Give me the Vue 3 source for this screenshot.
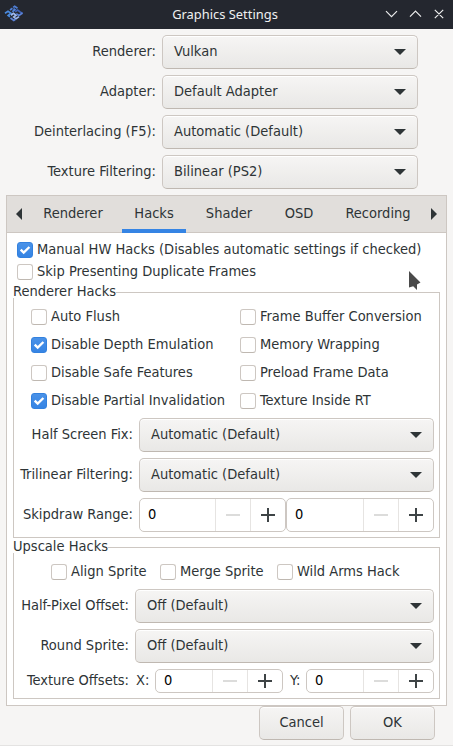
<script setup>
const topRows = [
  { label: 'Renderer:', value: 'Vulkan' },
  { label: 'Adapter:', value: 'Default Adapter' },
  { label: 'Deinterlacing (F5):', value: 'Automatic (Default)' },
  { label: 'Texture Filtering:', value: 'Bilinear (PS2)' },
]
const tabs = [
  { label: 'Renderer', cls: 't1' },
  { label: 'Hacks', cls: 't2 active' },
  { label: 'Shader', cls: 't3' },
  { label: 'OSD', cls: 't4' },
  { label: 'Recording', cls: 't5' },
]
const general = [
  { label: 'Manual HW Hacks (Disables automatic settings if checked)', on: true },
  { label: 'Skip Presenting Duplicate Frames', on: false },
]
const hacks = [
  { label: 'Auto Flush', on: false },
  { label: 'Frame Buffer Conversion', on: false },
  { label: 'Disable Depth Emulation', on: true },
  { label: 'Memory Wrapping', on: false },
  { label: 'Disable Safe Features', on: false },
  { label: 'Preload Frame Data', on: false },
  { label: 'Disable Partial Invalidation', on: true },
  { label: 'Texture Inside RT', on: false },
]
const hackSelects = [
  { label: 'Half Screen Fix:', value: 'Automatic (Default)' },
  { label: 'Trilinear Filtering:', value: 'Automatic (Default)' },
]
const sprites = ['Align Sprite', 'Merge Sprite', 'Wild Arms Hack']
const upscaleSelects = [
  { label: 'Half-Pixel Offset:', value: 'Off (Default)' },
  { label: 'Round Sprite:', value: 'Off (Default)' },
]
</script>

<template>
  <div class="window">
    <header class="titlebar">
      <svg class="logo" width="20" height="18" viewBox="0 0 20 18">
        <g fill="none" stroke-width="1.7">
          <path d="M1 8.2 4 6.2 7 8.3 4.2 10.4 6 11.7" stroke="#4a8be0" />
          <path d="M6 5 8.5 3.2M8.3 6.8 11 4.8 9.5 3.6M9.2 2.4 10.7 1.3 13.5 3.2" stroke="#4f7fd6" />
          <path d="M11.2 6.9 13.6 5.1 16.2 7 18.6 8.4" stroke="#3d5fb4" />
          <path d="M7 10.3 9.5 8.4 12 10.2 9.7 12 12 13.8 15 11.6" stroke="#9db7ee" />
          <path d="M12.3 8.6 15 10.4 18.5 8M6.5 13 9.8 15.4 11.4 14.2" stroke="#5c83d8" />
        </g>
      </svg>
      <span class="title">Graphics Settings</span>
      <svg class="controls" width="60" height="12" viewBox="0 0 60 12">
        <path d="M1 3.2 6.5 8.7 12 3.2M25 8.7 30.5 3.2 36 8.7M49.8 1.8 58.2 10.2M58.2 1.8 49.8 10.2" fill="none" stroke="#eceded" stroke-width="1.2" />
      </svg>
    </header>

    <section class="top">
      <div v-for="r in topRows" :key="r.label" class="row">
        <span class="label">{{ r.label }}</span>
        <button class="combo">{{ r.value }}<i class="arrow"></i></button>
      </div>
    </section>

    <section class="notebook">
      <nav class="tabs">
        <i class="scroll left"></i>
        <span v-for="t in tabs" :key="t.label" class="tab" :class="t.cls">{{ t.label }}</span>
        <i class="scroll right"></i>
      </nav>
      <div class="page">
        <div class="general">
          <label v-for="c in general" :key="c.label" class="check">
            <span class="box" :class="{ on: c.on }"><svg v-if="c.on" width="14" height="14" viewBox="0 0 14 14"><path d="M2.7 6.6 5.7 9.6 11.4 4" /></svg></span><span class="text">{{ c.label }}</span>
          </label>
        </div>

        <div class="group renderer">
          <div class="legend">Renderer Hacks</div>
          <div class="grid">
            <label v-for="c in hacks" :key="c.label" class="check">
              <span class="box" :class="{ on: c.on }"><svg v-if="c.on" width="14" height="14" viewBox="0 0 14 14"><path d="M2.7 6.6 5.7 9.6 11.4 4" /></svg></span><span class="text">{{ c.label }}</span>
            </label>
          </div>
          <div v-for="r in hackSelects" :key="r.label" class="row">
            <span class="label">{{ r.label }}</span>
            <button class="combo">{{ r.value }}<i class="arrow"></i></button>
          </div>
          <div class="row range">
            <span class="label">Skipdraw Range:</span>
            <div v-for="n in 2" :key="n" class="spin"><span class="num">0</span><i class="minus"></i><i class="plus"></i></div>
          </div>
        </div>

        <div class="group upscale">
          <div class="legend">Upscale Hacks</div>
          <div class="sprites">
            <label v-for="s in sprites" :key="s" class="check"><span class="box"></span><span class="text">{{ s }}</span></label>
          </div>
          <div v-for="r in upscaleSelects" :key="r.label" class="row">
            <span class="label">{{ r.label }}</span>
            <button class="combo">{{ r.value }}<i class="arrow"></i></button>
          </div>
          <div class="row offsets">
            <span class="label">Texture Offsets:</span>
            <span class="axis x">X:</span>
            <div class="spin"><span class="num">0</span><i class="minus"></i><i class="plus"></i></div>
            <span class="axis y">Y:</span>
            <div class="spin"><span class="num">0</span><i class="minus"></i><i class="plus"></i></div>
          </div>
        </div>
        <svg class="cursor" width="18" height="24" viewBox="0 0 18 24">
          <path d="M3 2V18.5L7.2 17.2 11 21V15.5L14.5 13.5Z" fill="#4a4a4a" stroke="#fff" stroke-width="2" paint-order="stroke" />
        </svg>
      </div>
    </section>

    <footer class="actions">
      <button class="btn">Cancel</button>
      <button class="btn">OK</button>
    </footer>
  </div>
</template>

<style>
body { margin: 0; overflow: hidden; }
</style>

<style scoped>
* { box-sizing: border-box; }
.window {
  width: 453px;
  height: 746px;
  background: #f6f5f4;
  border-bottom: 1px solid #e4e3e2;
  color: #2e3436;
  font-family: "DejaVu Sans Condensed", "DejaVu Sans", sans-serif;
  font-stretch: condensed;
  font-size: 14.53px;
  line-height: 18px;
  white-space: nowrap;
  overflow: hidden;
}
.titlebar {
  height: 29px;
  background: #24272f;
  display: flex;
  align-items: center;
  justify-content: space-between;
  padding: 0 8px 0 4px;
}
.logo { margin-top: -2px; }
.title {
  font-family: "Noto Sans", sans-serif;
  font-stretch: normal;
  font-size: 12.9px;
  color: #eff0f1;
  margin: -2px 0 0 41px;
}
.controls { margin-top: -1px; }
.top {
  padding: 6px 35px 0 0;
  display: grid;
  gap: 6px;
}
.row { display: flex; }
.label {
  text-align: right;
  line-height: 32px;
  padding-right: 6px;
  flex: none;
}
.top .label { width: 162px; }
.combo, .btn {
  font: inherit;
  color: inherit;
  height: 34px;
  border: 1px solid #cdc7c2;
  border-bottom-color: #bfb8b1;
  border-radius: 5px;
  background: linear-gradient(#f6f5f4, #e9e8e6);
  box-shadow: inset 0 1px #fff;
  margin: 0;
}
.combo {
  flex: 1;
  display: flex;
  align-items: center;
  justify-content: space-between;
  padding: 0 11px 2px;
}
.arrow {
  width: 12px;
  height: 6px;
  background: #2e3436;
  clip-path: polygon(0 0, 100% 0, 50% 100%);
  margin-top: 2px;
}
.notebook {
  margin: 6px 6px 0;
  width: 441px;
  height: 511px;
  border: 1px solid #cdc7c2;
  background: #fff;
}
.tabs {
  height: 37px;
  background: #e1dedb;
  border-bottom: 1px solid #cdc7c2;
  display: flex;
  align-items: center;
}
.tab {
  height: 37px;
  align-self: flex-start;
  line-height: 34px;
  text-align: center;
  flex: none;
}
.t1 { width: 80px; margin-left: 11px; }
.t2 { width: 64px; margin-left: 9px; }
.t3 { width: 62px; margin-left: 12px; }
.t4 { width: 50px; margin-left: 14px; }
.t5 { width: 80px; margin-left: 14px; }
.active { border-bottom: 4px solid #3584e4; }
.scroll { width: 6px; height: 12px; background: #2e3436; flex: none; }
.left { margin-left: 9px; clip-path: polygon(100% 0, 100% 100%, 0 50%); }
.right { margin-left: 13px; clip-path: polygon(0 0, 100% 50%, 0 100%); }
.page {
  position: relative;
  padding: 9px 6px 0;
}
.general { padding-left: 4px; display: grid; gap: 6px; }
.check {
  display: flex;
  align-items: center;
  height: 16px;
  line-height: 16px;
  gap: 4px;
}
.text { margin-top: -2px; }
.box {
  width: 16px;
  height: 16px;
  border: 1px solid #cdc7c2;
  border-bottom-color: #bfb8b1;
  border-radius: 3px;
  background: #fff;
  flex: none;
}
.box.on {
  border-color: #3381de;
  background: linear-gradient(#4a92e8, #3584e4);
}
.box svg { display: block; }
.box path { fill: none; stroke: #fff; stroke-width: 2.4; }
.group {
  border: 1px solid #cdc7c2;
}
.renderer { margin-top: 12px; height: 246px; padding-right: 5px; }
.upscale { margin-top: 9px; height: 152px; padding-right: 5px; }
.legend {
  width: max-content;
  height: 14px;
  line-height: 14px;
  margin: -9px 0 0 -1px;
  background: #fff;
}
.grid {
  display: grid;
  grid-template-columns: 209px 1fr;
  row-gap: 12px;
  padding: 11px 0 0 17px;
  margin-bottom: 9px;
}
.group .row { margin-bottom: 6px; }
.renderer .label { width: 125px; }
.upscale .label { width: 121px; }
.spin {
  flex: 1;
  display: flex;
  height: 34px;
  border: 1px solid #cdc7c2;
  border-radius: 5px;
  background: #fff;
  color: #000;
  min-width: 0;
}
.range .spin:nth-child(2) { flex: none; width: 147px; }
.num { flex: 1; padding-left: 8px; line-height: 30px; }
.minus, .plus {
  width: 35px;
  flex: none;
  border-left: 1px solid #e6e4e2;
  background: linear-gradient(#dcdcdb, #dcdcdb) 50% 50% / 14px 2px no-repeat;
}
.plus {
  background:
    linear-gradient(#3e4446, #3e4446) 50% 50% / 14px 2px no-repeat,
    linear-gradient(#3e4446, #3e4446) 50% 50% / 2px 14px no-repeat;
}
.sprites { display: flex; padding: 11px 0 9px 37px; }
.sprites .check:nth-child(1) { width: 109px; }
.sprites .check:nth-child(2) { width: 117px; }
.offsets .spin { height: 24px; }
.offsets .num { line-height: 20px; }
.offsets .label, .axis { line-height: 22px; }
.axis.x { width: 20px; padding-left: 1px; }
.axis.y { width: 23px; padding-left: 7px; }
.cursor { position: absolute; left: 399px; top: 36px; }
.actions {
  display: flex;
  justify-content: flex-end;
  gap: 6px;
  padding-right: 18px;
}
.btn { width: 85px; padding: 0 0 2px; }
</style>
